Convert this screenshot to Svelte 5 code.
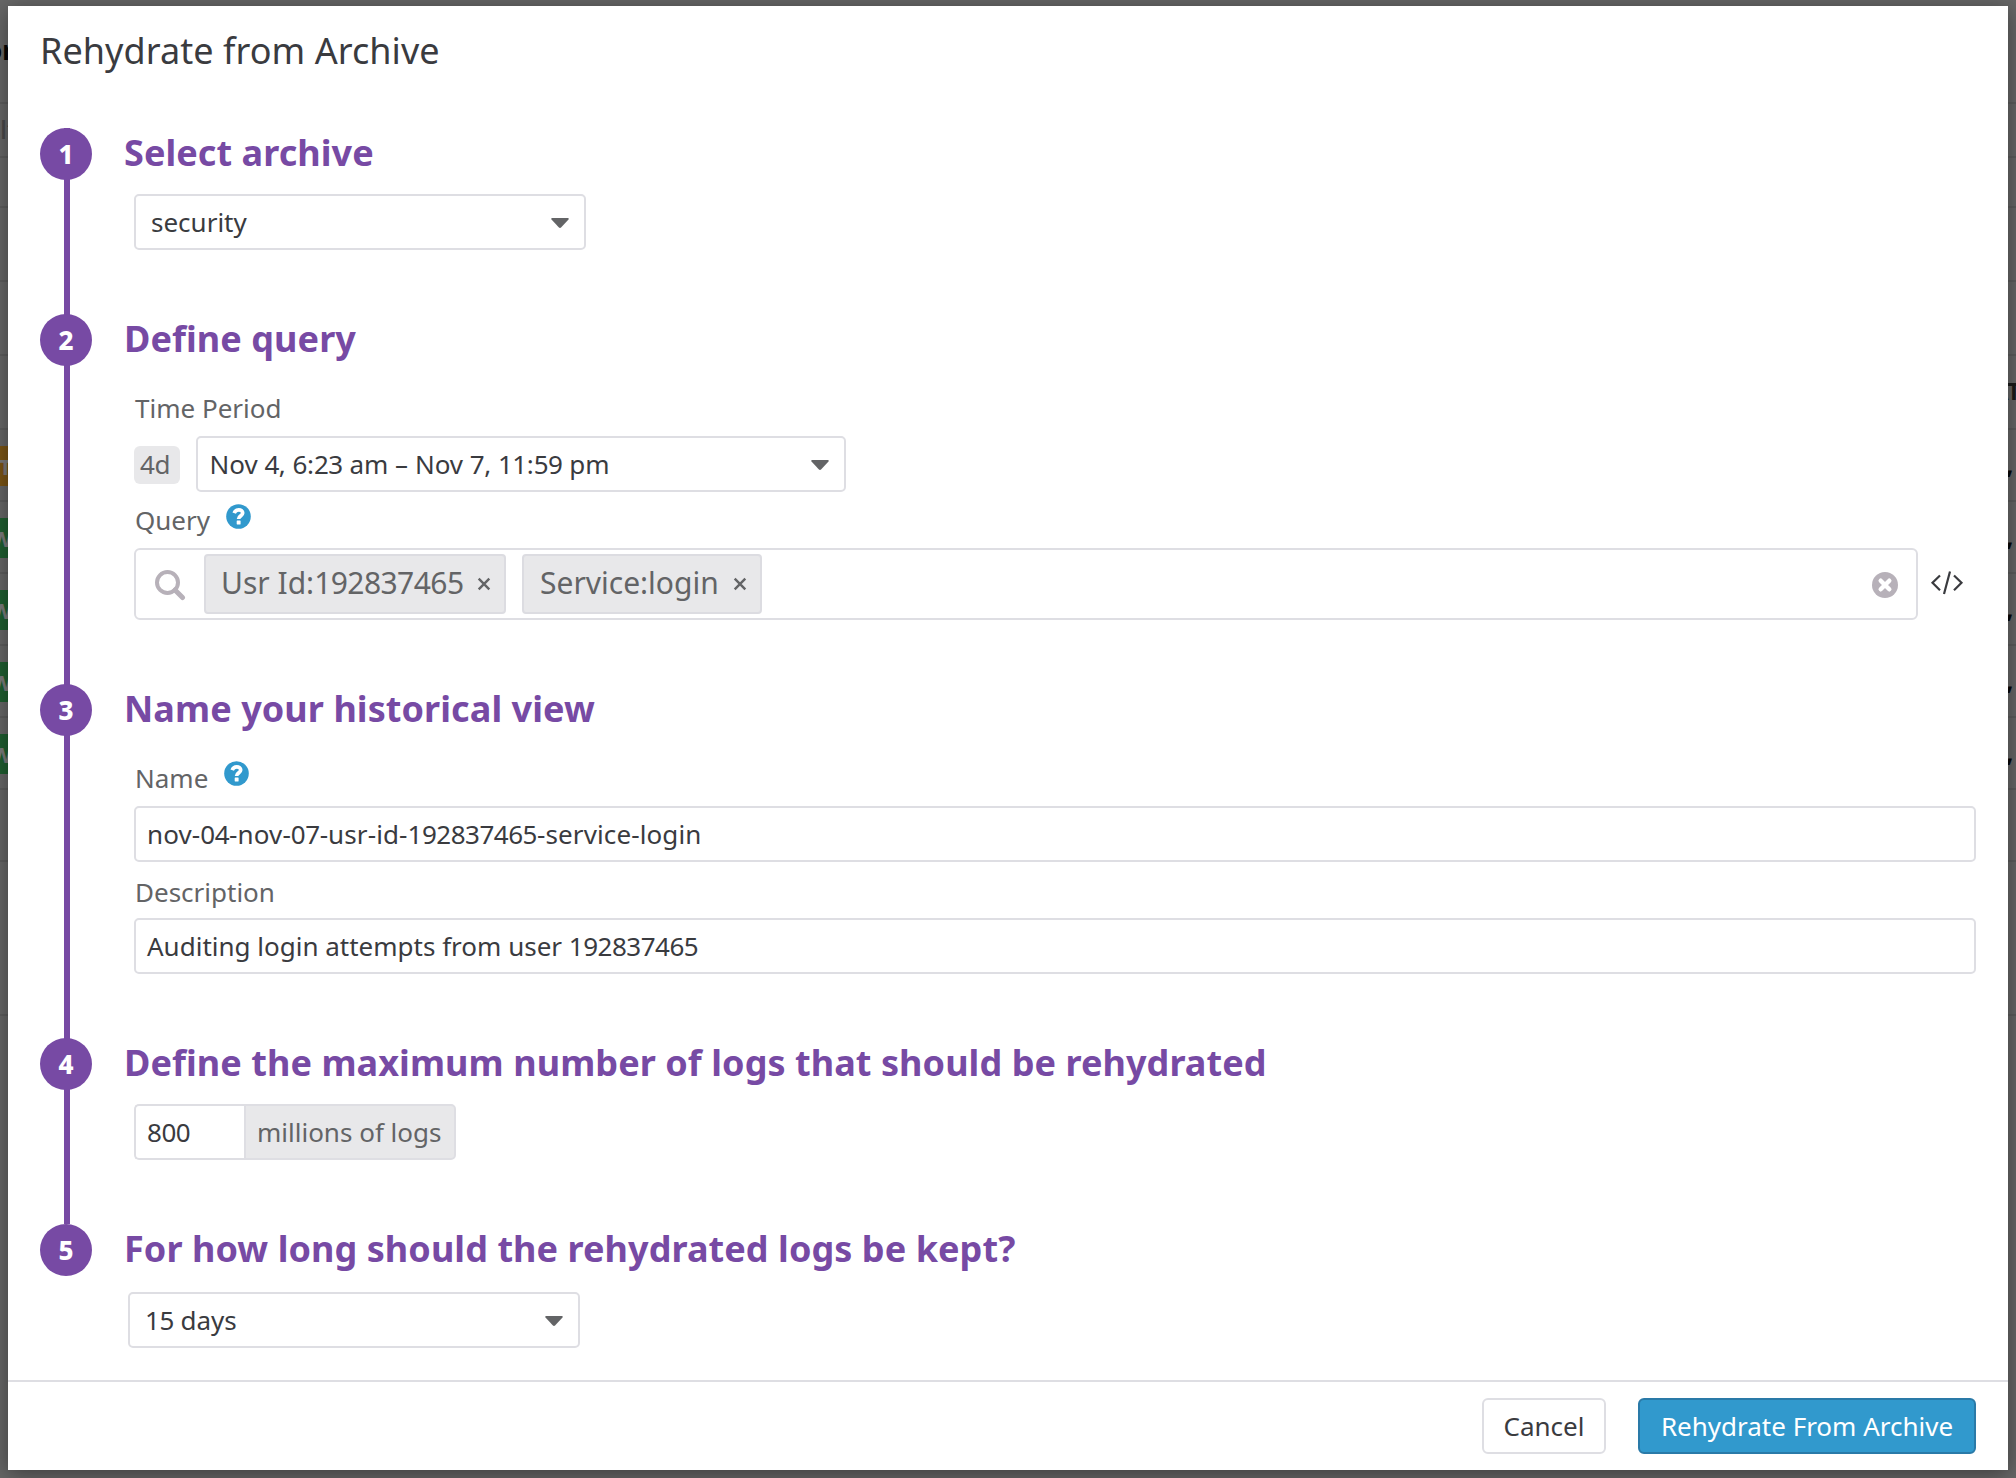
<script>
  const lines = [102, 156, 206, 280, 354, 428, 500, 572, 644, 716, 788, 860, 1014];
  const badges = [
    { top: 446, text: 'T', kind: 'warn' },
    { top: 518, text: 'W', kind: 'ok' },
    { top: 590, text: 'W', kind: 'ok' },
    { top: 662, text: 'W', kind: 'ok' },
    { top: 734, text: 'W', kind: 'ok' }
  ];
  const commas = [446, 518, 590, 662, 734];
  const tags = ['Usr Id:192837465', 'Service:login'];

  // Splits a text into runs of digits and everything else, so digits can be set tighter.
  const runs = (text) => text.split(/(\d+)/).filter(Boolean);
</script>

{#snippet figures(text)}{#each runs(text) as run}<span class={/\d/.test(run) ? 'digits' : 'words'}>{run}</span>{/each}{/snippet}

{#snippet caret()}
  <svg class="caret" width="18" height="10" viewBox="0 0 18 10"><path d="M1.200 0h15.600q1.500.3.700 1.600L10.300 9.300q-1.300 1.200-2.600 0L.5 1.600Q-.3.300 1.200 0z" /></svg>
{/snippet}

{#snippet help()}
  <svg class="help" width="25" height="25" viewBox="0 0 25 25">
    <circle cx="12.500" cy="12.500" r="12.300" fill="#3199cd" />
    <path d="M8.200 9.200C9 7 10.600 5.900 12.700 5.900c2.300 0 4 1.300 4 3.200 0 2.900-4.100 2.700-4.100 5.900" fill="none" stroke="#fff" stroke-width="3.700" />
    <rect x="10.700" y="16.500" width="3.900" height="3.900" rx=".4" fill="#fff" />
  </svg>
{/snippet}

{#snippet cross()}
  <svg class="cross" width="14" height="14" viewBox="0 0 14 14"><path d="M1.700 1.700l10.600 10.600M12.300 1.700L1.700 12.300" stroke="#636466" stroke-width="2.400" /></svg>
{/snippet}

<div class="page">
  <div class="behind" aria-hidden="true">
    {#each lines as y}
      <i class="rule left" style:top="{y}px"></i>
      <i class="rule right" style:top="{y}px"></i>
    {/each}
    <b class="frag brand">or</b>
    <span class="frag filter">lt</span>
    {#each badges as b}<span class="badge {b.kind}" style:top="{b.top}px">{b.text}</span>{/each}
    <b class="frag column">AT</b>
    {#each commas as y}<b class="frag comma" style:top="{y}px">,</b>{/each}
  </div>

  <div class="modal">
    <header>Rehydrate from Archive</header>
    <main>
      <section class="step s1">
        <div class="rail"><span class="num">1</span></div>
        <div class="content">
          <h2>Select archive</h2>
          <div class="select">security{@render caret()}</div>
        </div>
      </section>

      <section class="step s2">
        <div class="rail"><span class="num">2</span></div>
        <div class="content">
          <h2>Define query</h2>
          <div class="label period">Time Period</div>
          <div class="time">
            <span class="span">{@render figures('4d')}</span>
            <div class="select range"><span class="text">{@render figures('Nov 4, 6:23 am – Nov 7, 11:59 pm')}</span>{@render caret()}</div>
          </div>
          <div class="label query"><span>Query</span>{@render help()}</div>
          <div class="search-row">
            <div class="search">
              <svg class="mag" width="32" height="32" viewBox="0 0 32 32"><circle cx="13.500" cy="13.500" r="10.500" fill="none" stroke="#b7b1b9" stroke-width="4" /><path d="M21 21l7.500 7.500" stroke="#b7b1b9" stroke-width="5" stroke-linecap="round" /></svg>
              {#each tags as t}<span class="tag"><span class="tag-text">{@render figures(t)}</span>{@render cross()}</span>{/each}
              <svg class="clear" width="26" height="26" viewBox="0 0 26 26"><circle cx="13" cy="13" r="13" fill="#b7b1b9" /><path d="M8.700 8.700l8.600 8.600M17.300 8.700l-8.600 8.600" stroke="#fff" stroke-width="4.400" stroke-linecap="round" /></svg>
            </div>
            <svg class="code" width="34" height="26" viewBox="0 0 34 26"><path d="M10 5.500L2.500 12.800l7.500 7.500M24 5.500l7.500 7.300-7.500 7.500M20 1.500l-6 22.500" fill="none" stroke="#3a3b3f" stroke-width="2.200" /></svg>
          </div>
        </div>
      </section>

      <section class="step s3">
        <div class="rail"><span class="num">3</span></div>
        <div class="content">
          <h2>Name your historical view</h2>
          <div class="label name"><span>Name</span>{@render help()}</div>
          <div class="input slug"><span class="text">{@render figures('nov-04-nov-07-usr-id-192837465-service-login')}</span></div>
          <div class="label desc">Description</div>
          <div class="input"><span class="text">{@render figures('Auditing login attempts from user 192837465')}</span></div>
        </div>
      </section>

      <section class="step s4">
        <div class="rail"><span class="num">4</span></div>
        <div class="content">
          <h2>Define the maximum number of logs that should be rehydrated</h2>
          <div class="amount"><span class="value">{@render figures('800')}</span><span class="unit">millions of logs</span></div>
        </div>
      </section>

      <section class="step s5">
        <div class="rail"><span class="num">5</span></div>
        <div class="content">
          <h2>For how long should the rehydrated logs be kept?</h2>
          <div class="select days"><span class="text">{@render figures('15 days')}</span>{@render caret()}</div>
        </div>
      </section>
    </main>
    <footer>
      <button class="cancel">Cancel</button>
      <button class="primary">Rehydrate From Archive</button>
    </footer>
  </div>
</div>

<style>
  :global(body) { margin: 0; background: #666; }
  .page, .page * { box-sizing: border-box; }
  .page {
    position: relative;
    width: 2016px;
    height: 1478px;
    padding: 6px 8px 8px;
    overflow: hidden;
    background: #666;
    font-family: "Noto Sans", sans-serif;
    font-size: 26px;
    color: #3a3b3f;
  }
  .behind { position: absolute; inset: 0; }
  .rule { position: absolute; width: 20px; height: 2px; background: #5c5c5c; }
  .rule.left { left: 0; }
  .rule.right { right: 0; }
  .frag { position: absolute; color: #050505; line-height: 36px; }
  .brand { left: -14px; top: 32px; }
  .filter { left: 0; top: 111px; color: #484848; font-weight: 500; }
  .column { left: 1992px; top: 373px; font-size: 24px; color: #1a1a1a; }
  .comma { left: 2006px; }
  .badge {
    position: absolute;
    left: 0;
    width: 20px;
    height: 40px;
    overflow: hidden;
    font-size: 22px;
    line-height: 40px;
    font-weight: 700;
    color: #7a7a7a;
  }
  .badge.warn { background: #7a5414; text-indent: -1px; }
  .badge.ok { background: #1f5e30; text-indent: -9px; }

  .modal {
    position: relative;
    display: flex;
    flex-direction: column;
    width: 2000px;
    height: 1464px;
    background: #fff;
    box-shadow: 0 4px 20px rgba(0, 0, 0, 0.4);
  }
  header {
    height: 122px;
    padding: 21px 32px 0;
    font-size: 36px;
    line-height: 48px;
    letter-spacing: 0.06px;
  }
  main { flex: 1; }
  .step { display: flex; }
  .s1, .s4 { height: 186px; }
  .s2 { height: 370px; }
  .s3 { height: 354px; }
  .rail {
    width: 84px;
    padding-left: 32px;
    background: linear-gradient(#774aa4, #774aa4) 56px 0 / 6px 100% no-repeat;
  }
  .s5 .rail { background: none; }
  .num {
    display: block;
    width: 52px;
    height: 52px;
    border-radius: 50%;
    background: #774aa4;
    color: #fff;
    font-size: 26px;
    font-weight: 800;
    line-height: 53px;
    text-align: center;
  }
  .content { flex: 1; padding: 0 32px 0 42px; }
  h2 {
    margin: 0 0 17px -10px;
    padding-top: 1px;
    color: #774aa4;
    font-size: 36px;
    font-weight: 700;
    line-height: 48px;
    letter-spacing: 0.07px;
    white-space: nowrap;
  }
  .digits { letter-spacing: -0.019em; }
  .slug .words { letter-spacing: 0.11px; }
  .text { white-space: pre; }
  .select, .input, .time, .amount { display: flex; align-items: center; height: 56px; }
  .select, .input { border: 2px solid #dedee3; border-radius: 5px; }
  .select { justify-content: space-between; width: 452px; padding: 0 15px; }
  .range { width: 650px; padding: 0 15px 0 11.5px; }
  .input { padding: 0 11px; }
  .days { margin: 19px 0 0 -6px; }
  .caret { fill: #636466; margin-top: 2px; }
  .label { display: flex; height: 36px; line-height: 36px; padding-left: 1px; color: #636466; }
  .period { margin: 27px 0 10px; }
  .time { gap: 16px; }
  .span {
    width: 46px;
    height: 38px;
    margin-top: 2px;
    padding-left: 6px;
    border-radius: 6px;
    background: #e8e8ea;
    color: #636466;
    line-height: 37px;
  }
  .label.query { margin: 10px 0; gap: 16px; }
  .query .help { margin-top: 2px; }
  .search-row { display: flex; gap: 12px; }
  .search {
    display: flex;
    align-items: center;
    width: 1784px;
    height: 72px;
    padding: 0 18px;
    border: 2px solid #dedee3;
    border-radius: 6px;
  }
  .mag { margin: 2px 18px 0 0; }
  .tag {
    display: flex;
    align-items: center;
    justify-content: space-between;
    height: 60px;
    width: 302px;
    margin-right: 16px;
    padding: 0 13px 0 15px;
    border: 2px solid #dcdce1;
    border-radius: 4px;
    background: #e8e8ea;
    color: #636466;
    font-size: 30px;
  }
  .tag + .tag { width: 240px; padding-left: 16px; }
  .tag-text { padding-bottom: 4px; white-space: pre; }
  .clear { margin: 2px 0 0 auto; }
  .code { margin-top: 22px; }
  .label.name { margin: 27px 0 10px; gap: 16px; }
  .name .help { margin-top: 1px; }
  .label.desc { margin: 12px 0 8px; }
  .value, .unit { height: 56px; padding: 0 11px; line-height: 52px; border: 2px solid #dedee3; }
  .value { width: 110px; border-right: 0; border-radius: 5px 0 0 5px; }
  .unit { width: 212px; border-radius: 0 5px 5px 0; background: #e8e8ea; color: #636466; white-space: nowrap; }
  footer {
    display: flex;
    justify-content: flex-end;
    gap: 32px;
    height: 90px;
    padding: 16px 32px 0;
    border-top: 2px solid #dedee3;
  }
  button {
    height: 56px;
    padding: 0;
    border: 2px solid #dedee3;
    border-radius: 6px;
    background: #fff;
    color: #3a3b3f;
    font: inherit;
    line-height: 52px;
  }
  .cancel { width: 124px; }
  .primary { width: 338px; border-color: #2a7aa8; background: #3199cd; color: #fff; }
</style>
